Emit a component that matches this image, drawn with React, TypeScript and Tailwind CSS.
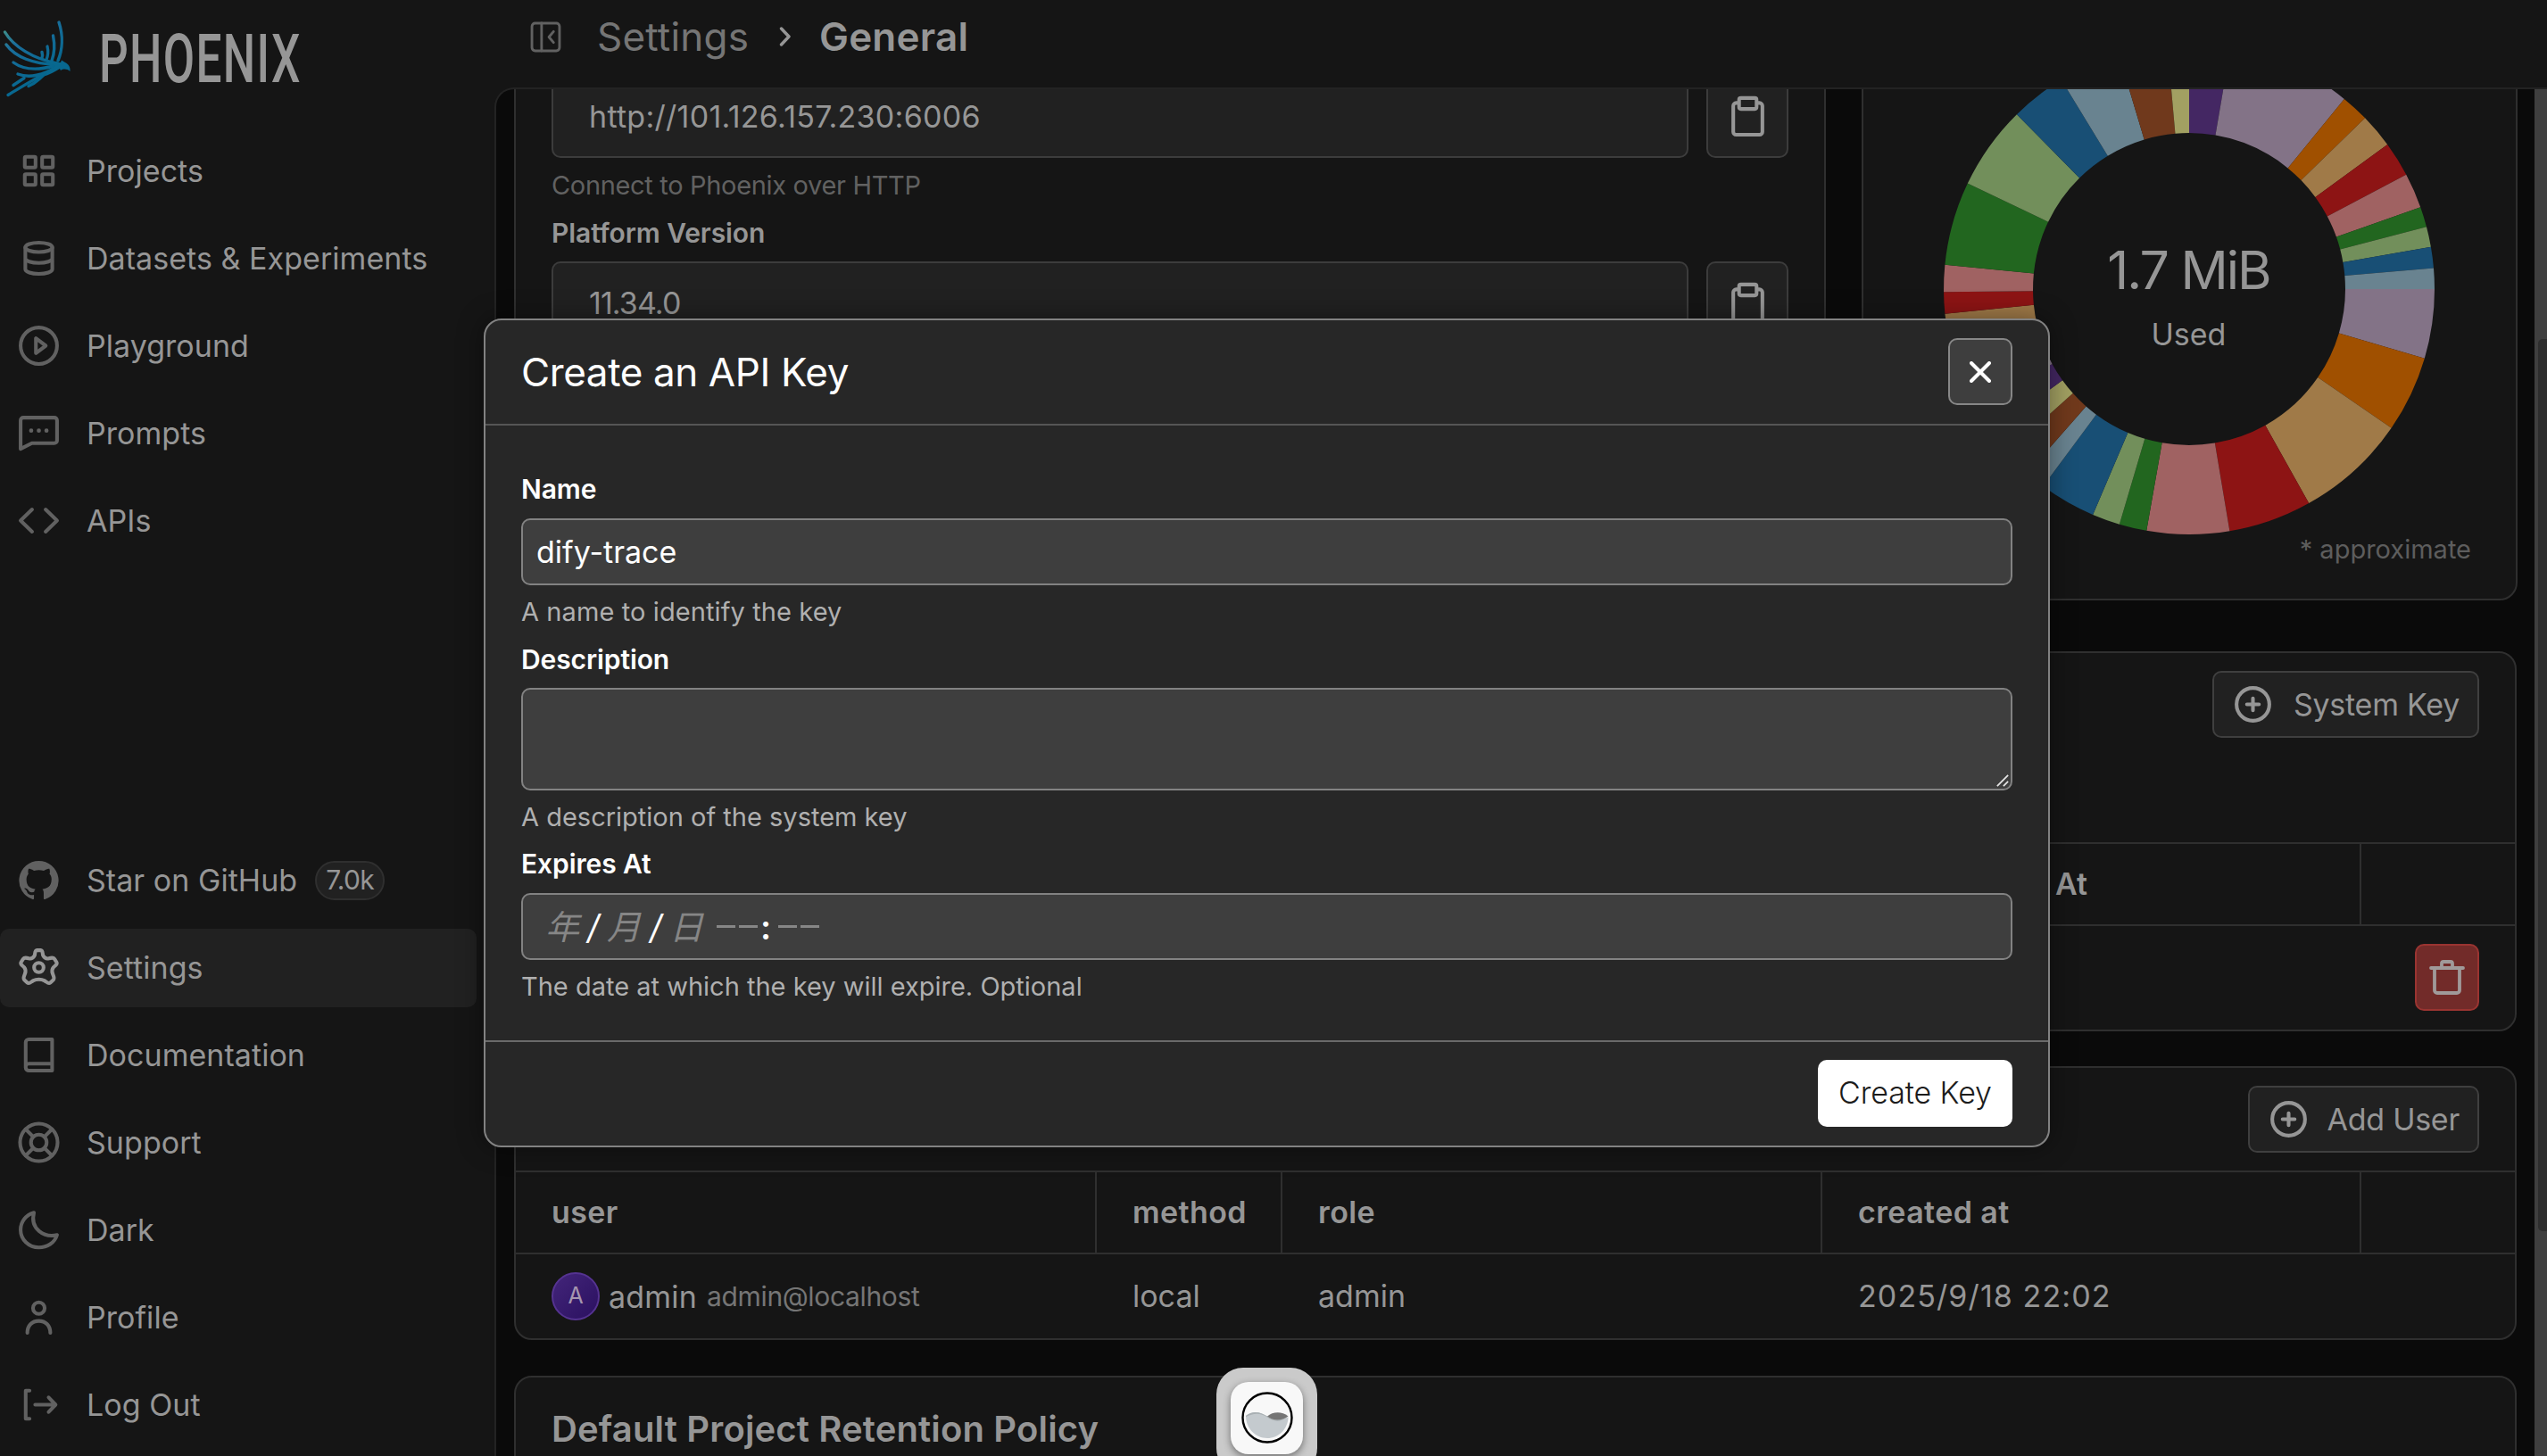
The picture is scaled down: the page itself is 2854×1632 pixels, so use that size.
import React from "react";

type P = { children: React.ReactNode; className?: string };

const stroke = { fill: "none", stroke: "currentColor", strokeWidth: 2, strokeLinecap: "round", strokeLinejoin: "round" } as const;

function Icon({ children, className = "" }: P) {
  return (
    <svg viewBox="0 0 24 24" className={"size-[49px] shrink-0 " + className} {...stroke}>
      {children}
    </svg>
  );
}

const GridIcon = () => (
  <Icon>
    <rect x="4.3" y="4.3" width="5.9" height="5.9" rx=".6" />
    <rect x="13.8" y="4.3" width="5.9" height="5.9" rx=".6" />
    <rect x="4.3" y="13.8" width="5.9" height="5.9" rx=".6" />
    <rect x="13.8" y="13.8" width="5.9" height="5.9" rx=".6" />
  </Icon>
);
const DatabaseIcon = () => (
  <Icon>
    <ellipse cx="12" cy="6" rx="7.4" ry="2.6" />
    <path d="M4.6 6v12c0 1.4 3.3 2.6 7.4 2.6s7.4-1.2 7.4-2.6V6M4.6 12c0 1.4 3.3 2.6 7.4 2.6s7.4-1.2 7.4-2.6" />
  </Icon>
);
const PlayIcon = () => (
  <Icon>
    <circle cx="12" cy="12" r="10" />
    <path d="M10.4 7.9v8.2L15.8 12z" />
  </Icon>
);
const MessageIcon = () => (
  <Icon>
    <path d="M3.5 3.5h17a1.5 1.5 0 0 1 1.5 1.5v11a1.5 1.5 0 0 1-1.5 1.5H8.2L2 20.6V5a1.5 1.5 0 0 1 1.5-1.5z" />
    <path d="M7.8 10.6h.01M12 10.6h.01M16.2 10.6h.01" strokeWidth="2.3" />
  </Icon>
);
const CodeIcon = () => (
  <Icon>
    <path d="M8.3 5.9 2 12l6.3 6.1M15.7 5.9 22 12l-6.3 6.1" />
  </Icon>
);
const GithubIcon = () => (
  <svg viewBox="0 0 24 24" className="mx-[2px] size-[45px] shrink-0" fill="currentColor">
    <path d="M12 .5a11.8 11.8 0 0 0-3.7 23c.6.1.8-.3.8-.6v-2.1c-3.3.7-4-1.5-4-1.5-.5-1.4-1.3-1.8-1.3-1.8-1.1-.7.1-.7.1-.7 1.2.1 1.8 1.2 1.8 1.2 1 1.8 2.8 1.3 3.5 1 .1-.8.4-1.3.8-1.6-2.7-.3-5.4-1.3-5.4-5.9 0-1.3.5-2.3 1.2-3.2-.1-.3-.5-1.5.1-3.1 0 0 1-.3 3.2 1.2a11 11 0 0 1 5.9 0c2.3-1.5 3.3-1.2 3.3-1.2.6 1.6.2 2.8.1 3.1.8.9 1.2 1.9 1.2 3.2 0 4.6-2.8 5.6-5.5 5.9.5.4.8 1.1.8 2.2v3.300c0 .3.2.7.8.6A11.8 11.8 0 0 0 12 .5z" />
  </svg>
);
const GearIcon = () => (
  <Icon>
    <circle cx="12" cy="12" r="2.6" />
    <path d="M9.7 5.3C10 4.3 9.7 2.6 11 2.5h2C14.3 2.6 14 4.3 14.3 5.3C15 6.7 16.1 7.3 17.5 7C18.8 6.600 20 6.4 20.6 7.3L21.8 9.2C22.3 10.4 20.9 10.9 20 11.9C19.1 13 19.2 14.3 19.6 15.4C20 16.7 20.8 17.8 20 18.7L18.300 20.3C17.3 21.2 16.4 20 15.3 19.3C14.3 18.8 13.2 18.5 12 18.5C10.8 18.5 9.7 18.8 8.7 19.3C7.6 20 6.7 21.2 5.7 20.3L4 18.7C3.2 17.8 4 16.7 4.4 15.4C4.8 14.3 4.9 13 4 11.9C3.1 10.9 1.7 10.4 2.2 9.2L3.4 7.3C4 6.4 5.2 6.6 6.5 7C7.9 7.3 9 6.7 9.7 5.3Z" />
  </Icon>
);
const BookIcon = () => (
  <Icon>
    <path d="M19.3 3.4H6.5a1.7 1.7 0 0 0-1.7 1.7v13.8a1.7 1.7 0 0 0 1.7 1.7h12.8zM4.8 18.5a1.7 1.7 0 0 1 1.7-1.7h12.8" />
  </Icon>
);
const SupportIcon = () => (
  <Icon>
    <circle cx="12" cy="12" r="10.3" />
    <circle cx="12" cy="12" r="4.3" />
    <path d="m4.8 4.8 4.1 4.1M19.2 4.8l-4.1 4.1M4.8 19.2l4.1-4.1M19.2 19.2l-4.1-4.1" />
  </Icon>
);
const MoonIcon = () => (
  <Icon>
    <path d="M9.3 2.6C4.8 3.9 2 7.7 2 12c0 5.4 4.5 9.7 10 9.7 4.7 0 8.7-2.6 10-6.9-6.7 1.7-15-3-12.7-12.2z" />
  </Icon>
);
const UserIcon = () => (
  <Icon>
    <circle cx="12" cy="7" r="3.2" />
    <path d="M5.7 20.6c0-4 2.5-6.6 6.3-6.6s6.3 2.6 6.3 6.6" />
  </Icon>
);
const LogOutIcon = () => (
  <Icon>
    <path d="M6.9 4.3H4.8v15.4h2.1M10 12h11M17.4 8l3.8 4-3.8 4" />
  </Icon>
);
const ClipboardIcon = () => (
  <Icon className="text-[#969696]">
    <rect x="4" y="4.6" width="16" height="17.4" rx="1.6" />
    <rect x="7.2" y="1.9" width="9.6" height="6" rx="1" className="fill-[#212121]" />
  </Icon>
);
const PlusCircle = () => (
  <Icon>
    <circle cx="12" cy="12" r="9" />
    <path d="M12 8.7v6.6M8.7 12h6.6" />
  </Icon>
);

function Bird() {
  return (
    <svg viewBox="0 0 80 110" className="h-[110px] w-[80px] shrink-0" fill="none" strokeLinecap="round">
      <defs>
        <linearGradient id="wing" gradientUnits="userSpaceOnUse" x1="4" y1="34" x2="50" y2="100">
          <stop offset="0" stopColor="#3f8f89" />
          <stop offset="0.25" stopColor="#1b6f9c" />
          <stop offset="1" stopColor="#00648a" />
        </linearGradient>
      </defs>
      <g stroke="url(#wing)" strokeWidth="3.4">
        <path d="M5.5 36C15 52 37 66 64 71" />
        <path d="M7 50C17 64 38 72 62 72" />
        <path d="M15 70C26 78 42 79 60 74" />
        <path d="M20 83C33 88 49 84 63 75" />
        <path d="M9 106.5C30 94 45 84 66 75" />
        <path d="M15 95.5 27 87.5M32 96.5C40 93 42 90 48 85" />
        <path d="M66 25C71 40 70 56 65 68" />
        <path d="M59.5 40C61.5 50 61 60 58 68" />
        <path d="M53 52C54.5 58 54 62 52 67" strokeWidth="3.2" />
        <path d="M47 58.5C48 62 48 63 47 65" />
      </g>
      <path d="M52 70C58 69 64 70 68 70L69 67.500 73 70C77 72 79 75 78.500 80 75 77 71 77 68 79L67 77C62 80 55 84 48 86 54 80 58 76 62 74Z" fill="#08688f" />
    </svg>
  );
}

const topNav = [
  { label: "Projects", icon: <GridIcon /> },
  { label: "Datasets & Experiments", icon: <DatabaseIcon /> },
  { label: "Playground", icon: <PlayIcon /> },
  { label: "Prompts", icon: <MessageIcon /> },
  { label: "APIs", icon: <CodeIcon /> },
];
const bottomNav = [
  { label: "Star on GitHub", icon: <GithubIcon />, badge: "7.0k" },
  { label: "Settings", icon: <GearIcon />, active: true },
  { label: "Documentation", icon: <BookIcon /> },
  { label: "Support", icon: <SupportIcon /> },
  { label: "Dark", icon: <MoonIcon /> },
  { label: "Profile", icon: <UserIcon /> },
  { label: "Log Out", icon: <LogOutIcon /> },
];

function NavItem({ label, icon, badge, active }: { label: string; icon: React.ReactNode; badge?: string; active?: boolean }) {
  return (
    <div className={"flex h-[88px] items-center rounded-[10px] pb-[1px] pl-[19px] " + (active ? "bg-[#212121]" : "")}>
      <span className={active ? "text-[#969696]" : "text-[#616161]"}>{icon}</span>
      <span className="ml-[29px] whitespace-nowrap pb-[1px] tracking-[0.05px]">{label}</span>
      {badge && (
        <span className="ml-[20px] flex h-[44px] items-center rounded-full border-2 border-[#2f2f2f] bg-[#212121] px-[10px] text-[30px] tracking-[-0.7px]">{badge}</span>
      )}
    </div>
  );
}

const C = {
  purple: "#442763", lavender: "#837387", orange: "#a05000", tan: "#a07a48", red: "#8d1414", pink: "#a06262",
  green: "#22661f", lime: "#728f5b", blue: "#184f75", sky: "#698390", brown: "#70391c", yellow: "#a2a062",
};
/* Each slice: end angle in degrees clockwise from the top, and its colour. */
const slices: [number, string][] = [
  [9.7, C.purple], [39.2, C.lavender], [45.8, C.orange], [53.9, C.tan], [62.2, C.red], [70.5, C.pink], [75.3, C.green],
  [80.1, C.lime], [85.1, C.blue], [90, C.sky], [106.4, C.lavender], [124.5, C.orange], [150.8, C.tan], [170.5, C.red],
  [190, C.pink], [196.5, C.green], [203.1, C.lime], [216.5, C.blue], [221.3, C.sky], [228.1, C.brown], [234.2, C.yellow],
  [241.3, C.purple], [252, C.lavender], [257, C.orange], [264.2, C.tan], [269.3, C.red], [275.7, C.pink], [295.5, C.green],
  [315.4, C.lime], [328.6, C.blue], [343.3, C.sky], [354.9, C.brown], [360, C.yellow],
];
const polar = (deg: number, r: number) => {
  const a = (deg * Math.PI) / 180;
  return `${(276 + r * Math.sin(a)).toFixed(2)} ${(276 - r * Math.cos(a)).toFixed(2)}`;
};

function Donut() {
  return (
    <svg viewBox="0 0 552 552" className="size-[552px]">
      {slices.map(([end, color], i) => {
        const start = i ? slices[i - 1][0] : 0;
        return (
          <path key={i} fill={color} d={`M${polar(start, 275)}A275 275 0 0 1 ${polar(end, 275)}L${polar(end, 175)}A175 175 0 0 0 ${polar(start, 175)}Z`} />
        );
      })}
    </svg>
  );
}

function CopyField({ value, className }: { value: string; className: string }) {
  return (
    <div className="flex gap-[20px]">
      <div className="flex h-[93px] w-[1274px] items-center rounded-[10px] border-2 border-[#3c3c3c] bg-[#212121] pl-[40px] text-[34px]">
        <span className={className}>{value}</span>
      </div>
      <div className="flex h-[93px] w-[92px] items-center justify-center rounded-[10px] border-2 border-[#3c3c3c] bg-[#212121]">
        <ClipboardIcon />
      </div>
    </div>
  );
}

function ActionButton({ children, className = "" }: P) {
  return (
    <div className={"flex h-[75px] items-center justify-between rounded-[10px] border-2 border-[#3f3f3f] bg-[#212121] pl-[19px] pr-[20px] text-[34px] tracking-[-0.25px] whitespace-nowrap " + className}>
      <PlusCircle />
      {children}
    </div>
  );
}

function Card({ children, className = "" }: P) {
  return <section className={"shrink-0 rounded-[20px] border-2 border-[#2f2f2f] bg-[#151515] " + className}>{children}</section>;
}

function Sidebar() {
  return (
    <aside className="flex h-full w-[534px] shrink-0 flex-col text-[34px] text-[#969696]">
      <div className="flex h-[148px] shrink-0 items-start">
        <Bird />
        <span className="mt-[16px] ml-[31px] block w-[230px] origin-left scale-x-[0.675] font-['Roboto'] text-[76px] leading-[100px] font-medium tracking-[2px] whitespace-nowrap">PHOENIX</span>
      </div>
      <nav className="flex flex-col gap-[10px]">
        {topNav.map((n) => <NavItem key={n.label} {...n} />)}
      </nav>
      <nav className="mt-auto mb-[13px] flex flex-col gap-[10px]">
        {bottomNav.map((n) => <NavItem key={n.label} {...n} />)}
      </nav>
    </aside>
  );
}

function Label({ children, className = "" }: P) {
  return <div className={"flex items-center text-[30px] font-semibold tracking-[-0.1px] " + className}>{children}</div>;
}
function Help({ children, className = "" }: P) {
  return <div className={"flex items-center text-[29px] whitespace-nowrap " + className}>{children}</div>;
}

function Dashes() {
  return (
    <span className="flex gap-[4px]">
      <i className="h-[2.5px] w-[21px] bg-[#868686]" />
      <i className="h-[2.5px] w-[21px] bg-[#868686]" />
    </span>
  );
}

function Modal() {
  return (
    <div role="dialog" className="absolute top-[357px] left-[542px] flex h-[929px] w-[1755px] flex-col rounded-[20px] border-2 border-[#828282] bg-[#272727] text-white shadow-[0_0_30px_rgba(0,0,0,0.4)]">
      <header className="flex h-[118px] shrink-0 items-center justify-between border-b-2 border-[#555] px-[40px] pb-[1px]">
        <h2 className="text-[44px] tracking-[-0.4px]">Create an API Key</h2>
        <div className="flex h-[75px] w-[72px] items-center justify-center rounded-[10px] border-2 border-[#878787] bg-[#3e3e3e]">
          <svg viewBox="0 0 24 24" className="size-[24px]" fill="none" stroke="currentColor" strokeWidth="4" strokeLinecap="round">
            <path d="M2 2l20 20M22 2 2 22" />
          </svg>
        </div>
      </header>
      <div className="flex grow flex-col px-[40px] pt-[53px]">
        <Label className="h-[36px]">Name</Label>
        <div className="mt-[15px] flex h-[75px] shrink-0 items-center rounded-[10px] border-2 border-[#828282] bg-[#3e3e3e] pb-[1px] pl-[15px] text-[34px]">dify-trace</div>
        <Help className="mt-[12px] h-[36px] tracking-[0.1px] text-[#b0b0b0]">A name to identify the key</Help>
        <Label className="mt-[17px] h-[36px]">Description</Label>
        <div className="relative mt-[14px] h-[115px] shrink-0 rounded-[10px] border-2 border-[#828282] bg-[#3e3e3e]">
          <svg viewBox="0 0 16 16" className="absolute right-[2px] bottom-[2px] size-[14px]" stroke="#e5e5e5" strokeWidth="2">
            <path d="M1 15 15 1M9 15l6-6" />
          </svg>
        </div>
        <Help className="mt-[12px] h-[36px] text-[#b0b0b0]">A description of the system key</Help>
        <Label className="mt-[16px] h-[36px]">Expires At</Label>
        <div className="mt-[15px] flex h-[75px] shrink-0 items-center rounded-[10px] border-2 border-[#828282] bg-[#3e3e3e] pl-[25px] font-['Inter','Noto_Sans_CJK_SC',sans-serif] text-[38px] leading-none">
          <span className="w-[47px] text-[#868686] italic">年</span>
          <span className="w-[22px] italic">/</span>
          <span className="w-[48px] text-[#868686] italic">月</span>
          <span className="w-[22px] italic">/</span>
          <span className="w-[53px] text-[#868686] italic">日</span>
          <span className="w-[49px]"><Dashes /></span>
          <span className="w-[20px] font-semibold">:</span>
          <Dashes />
        </div>
        <Help className="mt-[12px] h-[36px] text-[#b0b0b0]">The date at which the key will expire. Optional</Help>
      </div>
      <footer className="flex h-[118px] shrink-0 items-center justify-end border-t-2 border-[#6a6a6a] pr-[40px] pb-[2px]">
        <div className="flex h-[75px] w-[218px] items-center justify-center rounded-[10px] bg-white pb-[1px] text-[34px] font-[350] tracking-[-0.1px] whitespace-nowrap text-[#1c1c1c]">Create Key</div>
      </footer>
    </div>
  );
}

function Dock() {
  return (
    <div className="absolute top-[1533px] left-[1363px] flex h-[120px] w-[113px] justify-center rounded-[30px] bg-[#cacaca] pt-[16px]">
      <div className="flex size-[81px] items-center justify-center rounded-[20px] bg-[#f8f8f8] pb-[1px] shadow-[0_3px_8px_rgba(0,0,0,0.45)]">
        <svg viewBox="0 0 58 58" className="size-[58px]">
          <circle cx="29" cy="29" r="27.5" fill="#f8f8f8" stroke="#000" strokeWidth="2.4" />
          <path d="M5 27C12 21 21 22 29 27.5c6 4 14 4.5 23.5 1C52 42 42 52 29 52S5 41 5 27z" fill="#c4cace" />
          <path d="M5 27C12 21 21 22 29 27.5c7 5 14 5 22 1-8 6-15 5-22 0C21 23 13 24 5 28z" fill="#a9b0b3" />
          <path d="M29 27.5c6-5 16-6 23.5 0-7 5-17 5.5-23.5 0z" fill="#757575" />
        </svg>
      </div>
    </div>
  );
}

export default function App() {
  return (
    <div className="relative flex h-[1632px] w-[2854px] overflow-hidden bg-[#151515] font-['Inter','Noto_Sans_CJK_SC',sans-serif] text-[#969696]">
      <Sidebar />
      <main className="ml-[20px] flex grow flex-col">
        <div className="flex h-[98px] shrink-0 items-start">
          <svg viewBox="0 0 34 34" className="mt-[24px] ml-[40px] size-[35px] text-[#616161]" fill="none" stroke="currentColor" strokeWidth="2.8" strokeLinecap="round" strokeLinejoin="round">
            <rect x="2" y="2" width="30" height="30" rx="3.5" />
            <path d="M12.5 2v30M25.5 11l-5 6 5 6" />
          </svg>
          <div className="mt-[11px] flex h-[60px] items-center text-[44px]">
            <span className="ml-[40px] w-[204px] tracking-[0.2px] text-[#757575]">Settings</span>
            <svg viewBox="0 0 14 22" className="h-[22px] w-[14px]" fill="none" stroke="#969696" strokeWidth="3.4" strokeLinecap="round" strokeLinejoin="round"><path d="m2.500 2 8.500 9-8.500 9" /></svg>
            <span className="ml-[31px] font-semibold tracking-[0.2px]">General</span>
          </div>
        </div>
        <div className="flex min-h-0 grow overflow-hidden rounded-tl-[22px] border-t-2 border-l-2 border-[#232323] bg-[#0a0a0a]">
          <div className="flex w-[2284px] shrink-0 flex-col pl-[20px]">
            <div className="-mt-[60px] flex shrink-0 gap-[40px]">
              <Card className="flex h-[633px] w-[1470px] flex-col pt-[42px] pl-[40px]">
                <CopyField value="http://101.126.157.230:6006" className="tracking-[0.28px]" />
                <Help className="mt-[13px] h-[36px] tracking-[-0.33px] text-[#616161]">Connect to Phoenix over HTTP</Help>
                <Label className="mt-[17px] mb-[14px] h-[36px]">Platform Version</Label>
                <CopyField value="11.34.0" className="tracking-[-0.9px]" />
              </Card>
              <Card className="relative flex h-[633px] w-[735px] justify-center pr-[2px]">
                <div className="mt-[6px] h-[552px]"><Donut /></div>
                <div className="absolute top-[229px] flex flex-col items-center">
                  <span className="text-[59px] leading-[64px] tracking-[-2px]">1.7 MiB</span>
                  <span className="mt-[20px] text-[34px] leading-[40px]">Used</span>
                </div>
                <span className="absolute right-[50px] bottom-[37px] text-[29px] leading-[36px] text-[#5d5d5d]">* approximate</span>
              </Card>
            </div>
            <Card className="mt-[57px] flex h-[426px] w-[2244px] flex-col">
              <div className="flex h-[212px] shrink-0 items-start justify-end pt-[20px] pr-[40px]">
                <ActionButton className="w-[299px]">System Key</ActionButton>
              </div>
              <div className="flex h-[94px] shrink-0 border-y-2 border-[#2f2f2f]">
                <div className="flex grow items-center justify-end border-r-2 border-[#2f2f2f] pr-[305px] pb-[1px] text-[34px] font-semibold"><span>Expires At</span></div>
                <div className="w-[172px]" />
              </div>
              <div className="flex grow items-center justify-end pr-[40px] pb-[2px]">
                <div className="flex h-[75px] w-[72px] items-center justify-center rounded-[10px] border-2 border-[#9a3431] bg-[#722b29] text-[#a09a9a]">
                  <svg viewBox="0 0 42 42" className="size-[42px]" fill="none" stroke="currentColor" strokeWidth="3.8" strokeLinecap="round" strokeLinejoin="round">
                    <path d="M3 11h36M7 11v25a3 3 0 0 0 3 3h22a3 3 0 0 0 3-3V11M15 11V6a2 2 0 0 1 2-2h8a2 2 0 0 1 2 2v5" />
                  </svg>
                </div>
              </div>
            </Card>
            <Card className="mt-[39px] flex h-[307px] w-[2244px] flex-col">
              <div className="flex h-[115px] shrink-0 items-start justify-end pt-[20px] pr-[40px]">
                <ActionButton className="w-[259px]">Add User</ActionButton>
              </div>
              <div className="grid h-[94px] shrink-0 grid-cols-[651px_208px_605px_604px_172px] border-y-2 border-[#2f2f2f] text-[34px] font-semibold tracking-[0.4px]">
                {["user", "method", "role", "created at"].map((h) => (
                  <div key={h} className="flex items-center border-r-2 border-[#2f2f2f] pb-[2px] pl-[40px]">{h}</div>
                ))}
              </div>
              <div className="grid grow grid-cols-[651px_208px_605px_604px_172px] text-[34px]">
                <div className="flex items-center pl-[40px]">
                  <span className="flex size-[54px] items-center justify-center rounded-full border-2 border-[#553391] bg-linear-to-br from-[#43257a] to-[#2b1060] text-[25px] text-[#a696b0]">A</span>
                  <span className="ml-[10px] tracking-[0.2px]">admin</span>
                  <span className="ml-[11px] text-[30px] tracking-[-0.35px] text-[#757575]">admin@localhost</span>
                </div>
                <div className="flex items-center pb-[1px] pl-[40px]">local</div>
                <div className="flex items-center pb-[1px] pl-[40px]">admin</div>
                <div className="flex items-center pb-[1px] pl-[40px] tracking-[1.1px]">2025/9/18 22:02</div>
              </div>
            </Card>
            <Card className="mt-[40px] h-[140px] w-[2244px] pt-[30px] pl-[40px] text-[40px] leading-[56px] font-semibold tracking-[0.15px]">
              <span>Default Project Retention Policy</span>
            </Card>
          </div>
          <div className="flex w-[14px] shrink-0 flex-col bg-[#3f3f3f]">
            <div className="mt-[280px] ml-[4px] h-[1000px] rounded-l-[5px] bg-[#2e2e2e]" />
          </div>
        </div>
      </main>
      <Modal />
      <Dock />
    </div>
  );
}
